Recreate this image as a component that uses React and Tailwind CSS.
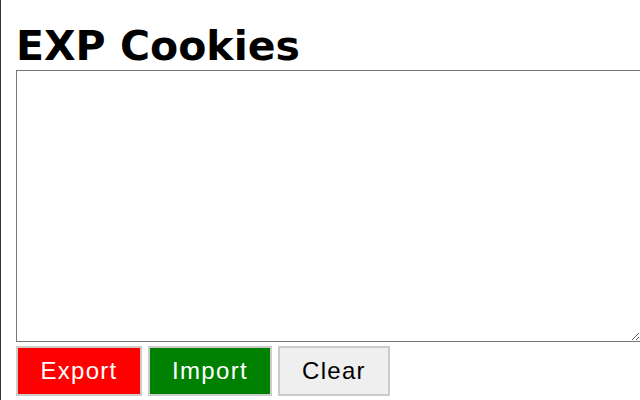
export default function App() {
  const btn =
    "h-[50px] border-2 border-[#cccccc] text-[24px] tracking-[1.3px] leading-none flex items-center justify-center";

  return (
    <div className="w-[640px] h-[400px] overflow-hidden bg-white border-l border-[#333333] pl-[15px] font-['Liberation_Sans',Arial,sans-serif]">
      <h1 className="mt-[22px] text-[41px] leading-[48px] font-bold text-black font-['DejaVu_Sans',Verdana,sans-serif]">
        EXP Cookies
      </h1>
      <textarea className="block w-[625px] h-[272px] border border-[#767676] bg-white outline-none resize-y" />
      <div className="flex gap-[6px] mt-[4px]">
        <button className={`${btn} w-[126px] bg-[#ff0000] text-white`}>Export</button>
        <button className={`${btn} w-[124px] bg-[#008000] text-white`}>Import</button>
        <button className={`${btn} w-[112px] bg-[#efefef] text-black`}>Clear</button>
      </div>
    </div>
  );
}
